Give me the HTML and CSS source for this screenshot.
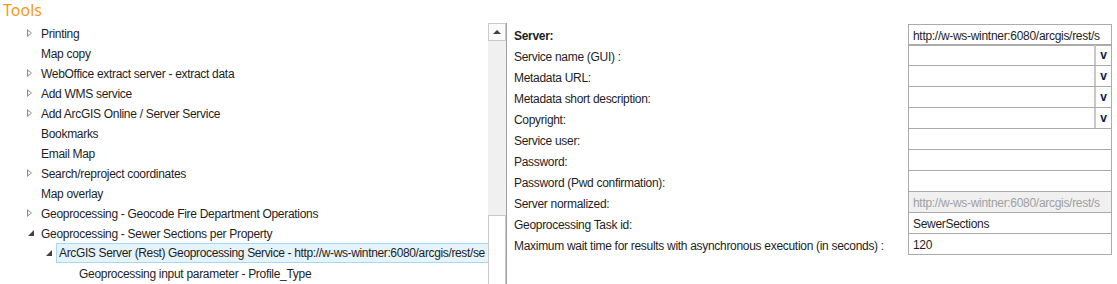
FILE: index.html
```html
<!DOCTYPE html>
<html lang="en">
<head>
    <meta charset="UTF-8">
    <title>Tools</title>
    <link rel="stylesheet" href="styles.css">
</head>
<body>
    <div class="title">Tools</div>
    <div class="main">
        <div class="tree-panel">
            <div class="tree">
                <div class="row lvl1"><span class="exp closed"></span>Printing</div>
                <div class="row lvl1"><span class="exp"></span>Map copy</div>
                <div class="row lvl1"><span class="exp closed"></span>WebOffice extract server - extract data</div>
                <div class="row lvl1"><span class="exp closed"></span>Add WMS service</div>
                <div class="row lvl1"><span class="exp closed"></span>Add ArcGIS Online / Server Service</div>
                <div class="row lvl1"><span class="exp"></span>Bookmarks</div>
                <div class="row lvl1"><span class="exp"></span>Email Map</div>
                <div class="row lvl1"><span class="exp closed"></span>Search/reproject coordinates</div>
                <div class="row lvl1"><span class="exp"></span>Map overlay</div>
                <div class="row lvl1"><span class="exp closed"></span>Geoprocessing - Geocode Fire Department Operations</div>
                <div class="row lvl1"><span class="exp open"></span>Geoprocessing - Sewer Sections per Property</div>
                <div class="row lvl2"><span class="exp open"></span><span class="sel">ArcGIS Server (Rest) Geoprocessing Service - http://w-ws-wintner:6080/arcgis/rest/se</span></div>
                <div class="row lvl3"><span class="exp"></span>Geoprocessing input parameter - Profile_Type</div>
            </div>
            <div class="scrollbar">
                <div class="sb-up"><span class="sb-arrow"></span></div>
                <div class="sb-track"></div>
                <div class="sb-thumb"></div>
            </div>
        </div>

        <div class="form">
            <div class="label bold">Server:</div>
            <div class="field">http://w-ws-wintner:6080/arcgis/rest/s</div>

            <div class="label">Service name (GUI) :</div>
            <div class="field combo"><span class="val"></span><span class="drop">v</span></div>

            <div class="label">Metadata URL:</div>
            <div class="field combo"><span class="val"></span><span class="drop">v</span></div>

            <div class="label">Metadata short description:</div>
            <div class="field combo"><span class="val"></span><span class="drop">v</span></div>

            <div class="label">Copyright:</div>
            <div class="field combo"><span class="val"></span><span class="drop">v</span></div>

            <div class="label">Service user:</div>
            <div class="field"></div>

            <div class="label">Password:</div>
            <div class="field"></div>

            <div class="label">Password (Pwd confirmation):</div>
            <div class="field"></div>

            <div class="label">Server normalized:</div>
            <div class="field disabled">http://w-ws-wintner:6080/arcgis/rest/s</div>

            <div class="label">Geoprocessing Task id:</div>
            <div class="field">SewerSections</div>

            <div class="label">Maximum wait time for results with asynchronous execution (in seconds) :</div>
            <div class="field">120</div>
        </div>
    </div>
</body>
</html>
```

FILE: styles.css
```css
body {
    margin: 0;
    background: #fff;
    color: #1e1e1e;
    font-family: "Liberation Sans", Arial, sans-serif;
    font-size: 12px;
    letter-spacing: -0.3px;
    overflow: hidden;
}

.title {
    height: 23px;
    line-height: 21px;
    padding-left: 3px;
    font-family: "Noto Sans", sans-serif;
    font-size: 16px;
    letter-spacing: 0;
    color: #f39a22;
}

.main {
    display: flex;
    height: 261px;
}

/* tree */
.tree-panel {
    width: 507px;
    flex: none;
    display: flex;
}

.tree {
    flex: 1;
    min-width: 0;
    overflow: hidden;
}

.row {
    height: 20px;
    box-sizing: border-box;
    padding-top: 2px;
    display: flex;
    align-items: center;
    white-space: nowrap;
}

.lvl1 { padding-left: 27px; }
.lvl2 { padding-left: 45px; }
.lvl3 { padding-left: 65px; }

.exp {
    width: 14px;
    height: 9px;
    flex: none;
    position: relative;
    top: -1px;
}

.exp.closed::before {
    content: "";
    position: absolute;
    left: 0;
    top: 0;
    border-left: 5px solid #8a8a8a;
    border-top: 4.5px solid transparent;
    border-bottom: 4.5px solid transparent;
}

.exp.closed::after {
    content: "";
    position: absolute;
    left: 1px;
    top: 2px;
    border-left: 3px solid #fff;
    border-top: 2.5px solid transparent;
    border-bottom: 2.5px solid transparent;
}

.exp.open::before {
    content: "";
    position: absolute;
    left: 1px;
    top: 1px;
    border-right: 6px solid #404040;
    border-top: 6px solid transparent;
}

.sel {
    flex: 1;
    min-width: 0;
    overflow: hidden;
    height: 20px;
    box-sizing: border-box;
    line-height: 17px;
    margin-left: -3px;
    margin-top: -2px;
    padding-left: 2px;
    padding-top: 1px;
    letter-spacing: -0.36px;
    background: #e5f3fb;
    border: 1px solid #a6d8f5;
    border-right: none;
}

/* scrollbar */
.scrollbar {
    width: 18px;
    flex: none;
    display: flex;
    flex-direction: column;
    background: #f0f0f0;
    border-right: 1px solid #a0a0a0;
}

.sb-up {
    height: 18px;
    box-sizing: border-box;
    border: 1px solid #c9c9c9;
    background: #fafafa;
    display: flex;
    justify-content: center;
    align-items: center;
}

.sb-arrow {
    border-bottom: 4px solid #404040;
    border-left: 4px solid transparent;
    border-right: 4px solid transparent;
}

.sb-track {
    height: 174px;
}

.sb-thumb {
    flex: 1;
    background: #fff;
    border: 1px solid #c9c9c9;
    border-bottom: none;
}

/* form */
.form {
    margin-top: 1px;
    padding-left: 7px;
    display: grid;
    grid-template-columns: 394px 204px;
    grid-auto-rows: 21px;
    align-content: start;
}

.label {
    line-height: 21px;
    padding-top: 2px;
    white-space: nowrap;
}

.bold {
    font-weight: bold;
}

.field {
    height: 22px;
    box-sizing: border-box;
    border: 1px solid #ababab;
    margin-top: -1px;
    padding-left: 4px;
    padding-top: 1px;
    line-height: 20px;
    white-space: nowrap;
    overflow: hidden;
}

.form .field:nth-child(2) {
    margin-top: 0;
}

.field.disabled {
    background: #f0f0f0;
    color: #a0a0a0;
}

.combo {
    display: flex;
    padding: 0;
}

.combo .val {
    flex: 1;
}

.drop {
    width: 15px;
    border-left: 2px solid #c8c8c8;
    text-align: center;
    font-weight: bold;
    color: #0c1a4a;
}
```
